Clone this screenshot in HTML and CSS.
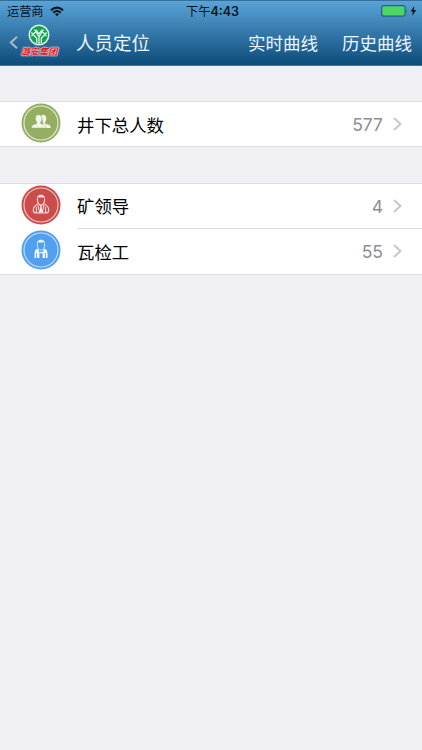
FILE: index.html
```
<!DOCTYPE html>
<html lang="zh-CN">
<head>
<meta charset="utf-8">
<title>人员定位</title>
<link rel="stylesheet" href="styles.css">
</head>
<body>
<header class="header">
  <div class="status">
    <div class="carrier"><span>运营商</span>
      <svg class="wifi" width="14" height="11" viewBox="0 0 15 11" fill="none" stroke="#08121c" stroke-width="2.2"><path d="M1 4.2Q7.5-1.6 14 4.2M3.5 6.8Q7.5 3.2 11.5 6.8"/><path d="M5.3 8.2Q7.5 6.5 9.7 8.2L7.5 10.6Z" fill="#08121c" stroke="none"/></svg>
    </div>
    <div class="clock">下午<b>4:43</b></div>
    <svg class="battery" width="37" height="12" viewBox="0 0 37 12"><rect x=".7" y=".7" width="23.4" height="10.4" rx="2.2" fill="#4bd763" stroke="#28618a" stroke-width="1.2"/><path d="M25.2 4.2q1.7 1.8 0 3.6z" fill="#28618a"/><path d="M33.3 1L29.6 6.5H32L31 11L35.2 5H32.7Z" fill="#08121c"/></svg>
  </div>
  <nav class="nav">
    <svg class="back" width="9" height="13" viewBox="0 0 9 13" fill="none" stroke="#aeb9c5" stroke-width="2"><path d="M8 .8L1.8 6.5L8 12.2"/></svg>
    <div class="logo">
      <svg width="22" height="22" viewBox="0 0 22 22"><circle cx="11" cy="11" r="10.5" fill="#d9efe6"/><circle cx="11" cy="11" r="9" fill="#12a24f"/><g fill="none" stroke="#e5f3ed" stroke-width="1.3"><path d="M11 20V13L6.5 5.5M11 13L15.5 5.5M8.7 19V14.2L3.4 8.5M13.3 19V14.2L18.6 8.5M3.4 12L6.4 9L8.3 6.3L11 10L13.7 6.3L15.6 9L18.6 12"/></g></svg>
      <span class="brand">潞安集团</span>
    </div>
    <h1 class="title">人员定位</h1>
    <span class="action">实时曲线</span>
    <span class="action">历史曲线</span>
  </nav>
</header>
<main>
  <section class="group">
    <div class="row total">
      <svg class="badge" viewBox="0 0 40 40"><circle cx="20" cy="20" r="19.5" fill="#94ae62"/><circle cx="20" cy="20" r="17" fill="none" stroke="#e6edd6" stroke-width="1.1"/><g fill="#f3f6ec"><path d="M20.5 12.2c2-1.2 4.8-.3 4.8 3.3 0 2-.6 3-1.3 3.8v1.2l4.3 1.6q1.4.7 1.4 2.900H23z"/><path d="M10.6 25c0-2.1.7-3 2.3-3.5l3-1.100v-1.200c-.9-.9-1.400-2-1.400-3.600 0-2.500 1.200-3.800 3.200-3.800s3.200 1.300 3.200 3.800c0 1.600-.5 2.700-1.400 3.600v1.200l3.300 1.200c1.700.6 2.400 1.400 2.400 3.400z" stroke="#94ae62" stroke-width=".4"/></g></svg>
      <div class="cell"><span class="label">井下总人数</span><span class="count">577</span><svg class="chevron" width="9" height="14" viewBox="0 0 9 14"><path d="M1 1L7.5 7L1 13"/></svg></div>
    </div>
  </section>
  <section class="group">
    <div class="row">
      <svg class="badge" viewBox="0 0 40 40"><circle cx="20" cy="20" r="19.5" fill="#cb4c4b"/><circle cx="20" cy="20" r="17" fill="none" stroke="#f0c9c8" stroke-width="1.1"/><path d="M16 15c-1-7 9-7 8 0l-1.1-2.7q-3 .5-5.7 0z" fill="#fae9e8"/><g fill="none" stroke="#f7dddc" stroke-width="1.1"><path d="M16.4 14c0 5 1.6 6 3.6 6s3.600-1 3.600-6M16.500 18.800L13 22q-.7 1-.7 3.300 0 2.700 2.500 2.700H25.200q2.500 0 2.500-2.700 0-2.300-.7-3.300L23.500 18.800M15.400 22v5.500M24.600 22v5.500M17 20l1.600 7.500M23 20l-1.600 7.500"/></g><path d="M19 20.500h2l-.4 1.700.8 5h-2.800l.8-5z" fill="#fff"/></svg>
      <div class="cell"><span class="label">矿领导</span><span class="count">4</span><svg class="chevron" width="9" height="14" viewBox="0 0 9 14"><path d="M1 1L7.5 7L1 13"/></svg></div>
    </div>
    <div class="row">
      <svg class="badge" viewBox="0 0 40 40"><circle cx="20" cy="20" r="19.5" fill="#51a0ef"/><circle cx="20" cy="20" r="17" fill="none" stroke="#c5e1fb" stroke-width="1.1"/><path d="M16 15c-1-7 9-7 8 0l-1.1-2.7q-3 .5-5.7 0z" fill="#e9f5ff"/><path d="M16.400 14c0 5 1.600 6 3.600 6s3.600-1 3.600-6" fill="none" stroke="#d8ecff"/><path d="M16.200 18.600Q13.500 20 13.500 23V28H15v-5h.8v5h2.600v-5.500l-1-3zM23.800 18.600Q26.500 20 26.500 23V28H25v-5h-.8v5h-2.600v-5.500l1-3zM18 22h4v1.300h-4z" fill="#f2f9ff"/></svg>
      <div class="cell"><span class="label">瓦检工</span><span class="count">55</span><svg class="chevron" width="9" height="14" viewBox="0 0 9 14"><path d="M1 1L7.5 7L1 13"/></svg></div>
    </div>
  </section>
</main>
</body>
</html>
```
FILE: styles.css
```
* { box-sizing: border-box; }
body {
  margin: 0;
  min-height: 750px;
  background: #efeff4;
  color: #000;
  font-family: "Liberation Sans", "Noto Sans CJK SC", sans-serif;
}
.header {
  height: 66px;
  background: linear-gradient(#5aa3d7, #0d4c7a);
  border-top: 1px solid #376f9b;
  border-bottom: 1px solid #3f759c;
}
.status {
  height: 20px;
  display: grid;
  grid-template-columns: 1fr auto 1fr;
  align-items: center;
  padding: 0 4px 0 7px;
  color: #08121c;
  font-size: 12.2px;
  line-height: 22px;
}
.carrier { display: flex; align-items: center; gap: 6px; }
.wifi { margin-top: -1px; }
.clock b { font-family: Inter, sans-serif; font-weight: 600; font-size: 12.5px; }
.battery { justify-self: end; margin-top: -3px; }
.nav { height: 44px; display: flex; align-items: center; padding: 0 10px 0 9px; color: #edf6fc; }
.back { flex: none; margin-top: -1px; }
.logo { width: 40px; height: 40px; margin-left: 1px; display: flex; flex-direction: column; align-items: center; padding-top: 1px; }
.logo svg { flex: none; }
.brand {
  white-space: nowrap;
  font-size: 9.2px;
  font-weight: 700;
  font-style: italic;
  line-height: 13px;
  color: #dd1822;
  text-shadow: 0 0 1px #ffe6e6, 0 0 1px #fff, 0 0 2px #fff;
}
.title { margin: 1px auto 0 17px; font-size: 18.5px; font-weight: 400; line-height: 26px; }
.action { margin: 2px 0 0 24px; font-size: 17.5px; line-height: 26px; }
.group {
  margin-top: 35px;
  background: #fff;
  border-top: 1px solid #dedee2;
  border-bottom: 1px solid #dedee2;
}
.group + .group { margin-top: 36px; }
.row { display: flex; align-items: center; height: 45px; padding-left: 21px; }
.row.total { height: 44px; }
.badge { width: 40px; height: 40px; flex: none; margin-top: -3px; }
.total .badge { margin-top: -2px; }
.cell { flex: 1; height: 100%; margin-left: 16px; padding: 0 20px 2px 0; display: flex; align-items: center; }
.total .cell { padding-bottom: 0; }
.row + .row .cell { height: 46px; margin-top: -1px; border-top: 1px solid #dedee2; padding-bottom: 1px; }
.label { flex: 1; font-size: 17.4px; }
.count { margin: 1px 10px 0 0; color: #8e8e93; font-family: Inter, sans-serif; font-size: 17.5px; }
.chevron { fill: none; stroke: #c7c7cc; stroke-width: 2; }
```
